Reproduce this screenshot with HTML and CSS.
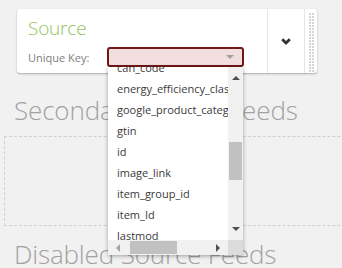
FILE: index.html
```html
<!DOCTYPE html>
<html lang="en">
<head>
    <meta charset="UTF-8">
    <meta name="viewport" content="width=device-width, initial-scale=1.0">
    <title>Feeds</title>
    <link rel="stylesheet" href="styles.css">
</head>
<body>
    <div class="page">
        <div class="feed-card">
            <div class="feed-main">
                <h2 class="feed-title">Source</h2>
                <div class="key-row">
                    <label class="key-label">Unique Key:</label>
                    <div class="select-wrap">
                        <div class="select-box">
                            <span class="select-arrow"></span>
                        </div>

                        <div class="dropdown">
                            <div class="dropdown-view">
                                <ul class="option-list">
                                    <li>can_code</li>
                                    <li>energy_efficiency_class</li>
                                    <li>google_product_category</li>
                                    <li>gtin</li>
                                    <li>id</li>
                                    <li>image_link</li>
                                    <li>item_group_id</li>
                                    <li>item_Id</li>
                                    <li>lastmod</li>
                                </ul>
                            </div>
                            <div class="vscroll">
                                <span class="arrow arrow-up"></span>
                                <div class="vtrack"><div class="vthumb"></div></div>
                                <span class="arrow arrow-down"></span>
                            </div>
                            <div class="hscroll">
                                <span class="arrow arrow-left"></span>
                                <div class="htrack"><div class="hthumb"></div></div>
                                <span class="arrow arrow-right"></span>
                            </div>
                            <div class="scroll-corner"></div>
                        </div>
                    </div>
                </div>
            </div>
            <button class="feed-toggle" type="button">
                <svg width="10" height="7" viewBox="0 0 10 7">
                    <polyline points="1.2,1.3 5,5 8.8,1.3" fill="none" stroke="#333" stroke-width="2.8"/>
                </svg>
            </button>
            <div class="feed-grip"></div>
        </div>

        <h3 class="section-title">Secondary Source Feeds</h3>
        <div class="drop-zone"></div>

        <h3 class="section-title">Disabled Source Feeds</h3>
    </div>
</body>
</html>
```

FILE: styles.css
```css
* {
    box-sizing: border-box;
    margin: 0;
    padding: 0;
}

body {
    font-family: 'Open Sans', 'Liberation Sans', sans-serif;
    background-color: #f1f1f1;
    overflow: hidden;
}

.page {
    padding: 9px 0 0 4px;
    width: 400px;
}

.feed-card {
    display: flex;
    width: 300px;
    height: 64px;
    margin-left: 13px;
    background-color: white;
    border-radius: 3px;
    box-shadow: 0 1px 2px rgba(0, 0, 0, 0.3);
}

.feed-main {
    flex: 1;
    padding: 8px 0 0 11px;
}

.feed-title {
    font-size: 19px;
    font-weight: 300;
    line-height: 23px;
    letter-spacing: -0.2px;
    color: #92c45c;
}

.key-row {
    display: flex;
    align-items: center;
    margin-top: 7px;
}

.key-label {
    width: 79px;
    font-size: 11px;
    color: #808080;
}

.select-wrap {
    position: relative;
}

.select-box {
    display: flex;
    align-items: center;
    justify-content: flex-end;
    width: 137px;
    height: 20px;
    padding-right: 8px;
    background-color: #f2dede;
    border: 2px solid #701818;
    border-radius: 3px;
}

.select-arrow {
    border-top: 4px solid #a0a0a0;
    border-left: 4px solid transparent;
    border-right: 4px solid transparent;
}

.dropdown {
    position: absolute;
    top: 20px;
    left: 1px;
    width: 135px;
    height: 188px;
    display: grid;
    grid-template-columns: 1fr 15px;
    grid-template-rows: 1fr 15px;
    background-color: white;
    box-shadow: 0 1px 4px rgba(0, 0, 0, 0.35);
    z-index: 5;
}

.dropdown-view {
    overflow: hidden;
}

.option-list {
    list-style: none;
    margin-top: -10px;
}

.option-list li {
    height: 21px;
    line-height: 21px;
    padding-left: 9px;
    font-size: 11px;
    color: #3a3a3a;
    white-space: nowrap;
}

.vscroll,
.hscroll {
    display: flex;
    align-items: center;
    background-color: #f1f1f1;
}

.vscroll {
    flex-direction: column;
    padding: 9px 0;
}

.vtrack {
    flex: 1;
    width: 100%;
    padding: 62px 1px 0;
}

.vthumb {
    height: 38px;
    background-color: #c1c1c1;
}

.hscroll {
    padding: 0 8px;
}

.htrack {
    flex: 1;
    height: 100%;
    padding: 1px 0 1px 10px;
}

.hthumb {
    width: 47px;
    height: 100%;
    background-color: #c1c1c1;
}

.scroll-corner {
    background-color: #dcdcdc;
}

.arrow {
    width: 0;
    height: 0;
    border: 4px solid transparent;
}

.arrow-up {
    border-top: none;
    border-bottom-color: #505050;
}

.arrow-down {
    border-bottom: none;
    border-top-color: #505050;
}

.arrow-left {
    border-left: none;
    border-right-color: #a3a3a3;
}

.arrow-right {
    border-right: none;
    border-left-color: #505050;
}

.feed-toggle {
    width: 37px;
    display: flex;
    align-items: center;
    justify-content: center;
    background: none;
    border: none;
    border-left: 1px solid #e6e6e6;
    cursor: pointer;
}

.feed-grip {
    width: 13px;
    padding: 3px 2px 1px 3px;
    border-left: 1px solid #e6e6e6;
    border-radius: 0 3px 3px 0;
    background-color: #d6d6d6;
    background-image:
        linear-gradient(white 1px, transparent 1px),
        linear-gradient(90deg, white 1px, transparent 1px);
    background-size: 3px 3px;
    background-clip: content-box;
    background-origin: content-box;
}

.section-title {
    margin-top: 22px;
    padding-left: 10px;
    font-size: 26px;
    font-weight: 300;
    line-height: 30px;
    letter-spacing: -0.15px;
    color: #a2a2a2;
}

.drop-zone {
    height: 90px;
    margin-top: 11px;
    border: 1px dashed #d0d0d0;
}

.drop-zone + .section-title {
    margin-top: 13px;
}
```
